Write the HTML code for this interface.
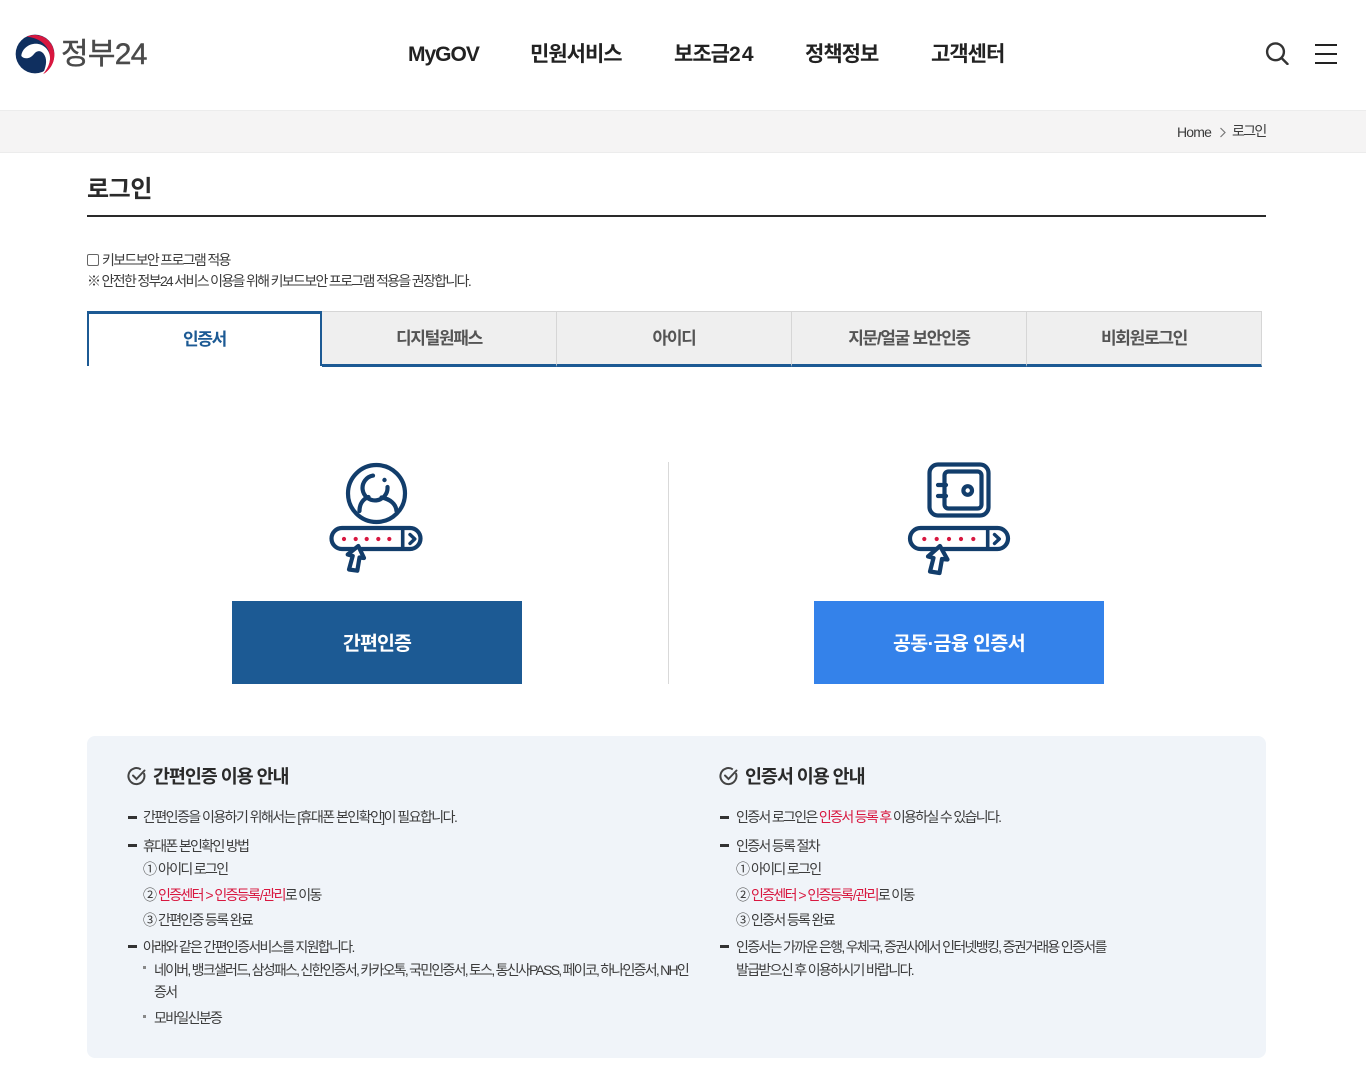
<!DOCTYPE html>
<html lang="ko"><head><meta charset="utf-8"><title>로그인 | 정부24</title>
<style>
*{box-sizing:border-box}
html,body{margin:0;padding:0;background:#fff}
body{width:1366px;height:1080px;position:relative;overflow:hidden;font-family:"Liberation Sans","Noto Sans CJK KR",sans-serif;color:#333}
.t{position:absolute;white-space:nowrap;line-height:20px;font-size:14px;letter-spacing:-1.67px;color:#3c3c3c}
.t i{font-style:normal;letter-spacing:1px}
.t b{font-weight:400;margin:0 2.5px}
.t u{text-decoration:none;margin:0 .5px}
.nav{font-size:21px;font-weight:700;letter-spacing:-1px;color:#222;top:42px;line-height:26px}
.tab{position:absolute;top:311px;height:56px;width:235px;background:#efefef;border:1px solid #d6d6d6;border-left:0;border-bottom:3px solid #1c5a94;text-align:center;font-size:17px;font-weight:700;line-height:53px;letter-spacing:-1.3px;color:#555}
.r{color:#d8173f}
.dash{position:absolute;width:9px;height:2.5px;background:#333}
.sq{position:absolute;width:3px;height:3px;background:#888}
.h{font-size:18.5px;font-weight:700;color:#2a2a2a;letter-spacing:-1.1px;line-height:24px}
.btn{position:absolute;top:601px;width:290px;height:83px;color:#fff;font-size:19.5px;font-weight:700;text-align:center;line-height:86px;letter-spacing:-.9px}
</style></head><body>

<svg style="position:absolute;left:10px;top:30px" width="50" height="48" viewBox="0 0 150 144">
<circle cx="75" cy="72" r="58" fill="#0f2f5f"/>
<path d="M50 20C85 5 130 25 133 72 134 100 118 122 100 132 118 110 125 85 115 60 100 30 70 22 50 20Z" fill="#d8173f"/>
<path d="M34 78C36 55 60 38 85 42 105 45 122 65 120 88 119 105 112 118 100 128 110 105 112 85 100 70 90 60 80 62 72 72 60 88 42 88 34 78Z" fill="#fff"/>
<path d="M133 72C134 100 118 122 100 132L112 134 140 100 140 72Z" fill="#fff"/>
<path d="M133 72C134 100 118 122 100 132 118 110 125 85 118 65Z" fill="#d8173f"/>
</svg>
<div class="t" style="left:61px;top:37px;font-size:30px;line-height:36px;letter-spacing:-.7px;color:#4a4a4a;-webkit-text-stroke:.4px #4a4a4a">정부24</div>

<div class="t nav" style="left:408px">MyGOV</div>
<div class="t nav" style="left:530px">민원서비스</div>
<div class="t nav" style="left:674px">보조금<span style="letter-spacing:1.2px">24</span></div>
<div class="t nav" style="left:805px">정책정보</div>
<div class="t nav" style="left:931px">고객센터</div>

<svg style="position:absolute;left:1264px;top:41px" width="26" height="24" viewBox="0 0 26 24" fill="none" stroke="#333" stroke-width="2.400">
<circle cx="11.500" cy="10.800" r="8.400"/><path d="M17.500 17l6 6" stroke-linecap="round"/></svg>
<div style="position:absolute;left:1315px;top:44px;width:22px;height:2px;background:#222"></div>
<div style="position:absolute;left:1315px;top:53px;width:22px;height:2px;background:#222"></div>
<div style="position:absolute;left:1315px;top:62px;width:22px;height:2px;background:#222"></div>

<div style="position:absolute;left:0;top:110px;width:1366px;height:43px;background:#f5f4f4;border-top:1px solid #ececec;border-bottom:1px solid #ececec"></div>
<div class="t" style="left:1177px;top:122px;letter-spacing:-.8px">Home</div>
<svg style="position:absolute;left:1219px;top:127px" width="8" height="11" viewBox="0 0 8 11" fill="none" stroke="#777" stroke-width="1.200"><path d="M1.500 1l4.500 4.500-4.500 4.500"/></svg>
<div class="t" style="left:1232px;top:121px;">로그인</div>

<div class="t" style="left:87px;top:175px;font-size:24px;line-height:30px;font-weight:700;letter-spacing:-.4px;color:#2b2b2b">로그인</div>
<div style="position:absolute;left:87px;top:215px;width:1179px;height:2px;background:#2a2a2a"></div>

<div style="position:absolute;left:87px;top:254px;width:12px;height:12px;border:1px solid #666;border-radius:2px;background:#fff"></div>
<div class="t" style="left:102px;top:250px">키보드보안 프로그램 적용</div>
<div class="t" style="left:87px;top:271px">※ 안전한 정부24 서비스 이용을 위해 키보드보안 프로그램 적용을 권장합니다.</div>

<div class="tab" style="left:322px;width:235px">디지털원패스</div>
<div class="tab" style="left:557px">아이디</div>
<div class="tab" style="left:792px">지문/얼굴 보안인증</div>
<div class="tab" style="left:1027px">비회원로그인</div>
<div style="position:absolute;left:87px;top:311px;width:235px;height:55px;background:#fff;border:3px solid #1c5a94;border-bottom:0;border-left-width:2.500px;border-right-width:2px;text-align:center;font-size:17px;font-weight:700;line-height:52px;letter-spacing:-1.3px;color:#1c5a94">인증서</div>

<svg style="position:absolute;left:300px;top:450px" width="150" height="135" viewBox="0 0 150 135" fill="none" stroke="#123d6b" stroke-width="4.200" stroke-linecap="round" stroke-linejoin="round">
<circle cx="76.500" cy="43.500" r="28.500"/>
<path d="M73 25.600A12.500 12.500 0 1 0 87.500 37"/>
<circle cx="84.500" cy="30" r="2.200" fill="#123d6b" stroke="none"/>
<path d="M59.500 61C59.500 54 63 49 68.500 47M81.500 47.500C90 49 96 54 96.500 61"/>
<rect x="31.500" y="78" width="89" height="21" rx="10.500"/>
<path d="M102.700 78v21" stroke-width="3.600"/>
<path d="M110 84.500l4.800 4.500-4.800 4.500" stroke-width="3.400"/>
<path d="M58.300 96L47.700 104.500 52.700 106 49 119.500 57.300 120.700 59.500 107.500 64 108Z" fill="#fff"/>
<g fill="#d8173f" stroke="none"><circle cx="44" cy="89" r="2.100"/><circle cx="55.700" cy="89" r="2.100"/><circle cx="66.700" cy="89" r="2.100"/><circle cx="78.300" cy="89" r="2.100"/><circle cx="89.300" cy="89" r="2.100"/></g>
</svg>

<svg style="position:absolute;left:890px;top:450px" width="140" height="135" viewBox="0 0 140 135" fill="none" stroke="#123d6b" stroke-width="4.200" stroke-linecap="round" stroke-linejoin="round">
<rect x="39.500" y="14.500" width="59" height="51" rx="8.500"/>
<rect x="54.500" y="21.500" width="37" height="37" rx="4"/>
<path d="M48 35h8M48 46h8"/>
<circle cx="77.700" cy="40.500" r="4.300"/>
<rect x="20" y="78" width="98" height="21" rx="10.500"/>
<path d="M97.700 78v21" stroke-width="3.600"/>
<path d="M104.500 84.500l4.800 4.500-4.800 4.500" stroke-width="3.400"/>
<path d="M50 96L38 106.500 43.500 108 40 121.500 49.500 123 52 109 57.500 109.500Z" fill="#fff"/>
<g fill="#d8173f" stroke="none"><circle cx="34.300" cy="89" r="2.100"/><circle cx="46.700" cy="89" r="2.100"/><circle cx="59" cy="89" r="2.100"/><circle cx="71" cy="89" r="2.100"/><circle cx="83.300" cy="89" r="2.100"/></g>
</svg>

<div style="position:absolute;left:668px;top:462px;width:1px;height:222px;background:#d9d9d9"></div>
<div class="btn" style="left:232px;background:#1c5a94">간편인증</div>
<div class="btn" style="left:814px;background:#3482ea;letter-spacing:-.6px">공동·금융 인증서</div>

<div style="position:absolute;left:87px;top:736px;width:1179px;height:322px;background:#f0f4f9;border-radius:8px"></div>

<svg style="position:absolute;left:127px;top:766px" width="20" height="20" viewBox="0 0 20 20" fill="none" stroke="#444" stroke-width="2"><path d="M16.800 7a8 8 0 1 1-3-3.600"/><path d="M6 9.500l3.500 3.500 8-8.500" stroke-linecap="round"/></svg>
<div class="t h" style="left:153px;top:765px">간편인증 이용 안내</div>
<svg style="position:absolute;left:719px;top:766px" width="20" height="20" viewBox="0 0 20 20" fill="none" stroke="#444" stroke-width="2"><path d="M16.800 7a8 8 0 1 1-3-3.600"/><path d="M6 9.500l3.500 3.500 8-8.500" stroke-linecap="round"/></svg>
<div class="t h" style="left:745px;top:765px">인증서 이용 안내</div>

<div class="dash" style="left:128px;top:816px"></div>
<div class="t" style="left:143px;top:807px;letter-spacing:-1.55px">간편인증을 이용하기 위해서는 [휴대폰 본인확인]이 필요합니다.</div>
<div class="dash" style="left:128px;top:844px"></div>
<div class="t" style="left:143px;top:836px">휴대폰 본인확인 방법</div>
<div class="t" style="left:143px;top:859px"><i>①</i>아이디 로그인</div>
<div class="t" style="left:143px;top:885px"><i>②</i><span class="r">인증센터<b>&gt;</b>인증등록<u>/</u>관리</span>로 이동</div>
<div class="t" style="left:143px;top:910px"><i>③</i>간편인증 등록 완료</div>
<div class="dash" style="left:128px;top:945px"></div>
<div class="t" style="left:143px;top:937px">아래와 같은 간편인증서비스를 지원합니다.</div>
<div class="sq" style="left:143px;top:966px"></div>
<div class="t" style="left:154px;top:960px;letter-spacing:-1.75px">네이버, 뱅크샐러드, 삼성패스, 신한인증서, 카카오톡, 국민인증서, 토스, 통신사PASS, 페이코, 하나인증서, NH인</div>
<div class="t" style="left:154px;top:982px">증서</div>
<div class="sq" style="left:143px;top:1015px"></div>
<div class="t" style="left:154px;top:1008px">모바일신분증</div>

<div class="dash" style="left:720px;top:816px"></div>
<div class="t" style="left:736px;top:807px">인증서 로그인은 <span class="r">인증서 등록 후</span> 이용하실 수 있습니다.</div>
<div class="dash" style="left:720px;top:844px"></div>
<div class="t" style="left:736px;top:836px">인증서 등록 절차</div>
<div class="t" style="left:736px;top:859px"><i>①</i>아이디 로그인</div>
<div class="t" style="left:736px;top:885px"><i>②</i><span class="r">인증센터<b>&gt;</b>인증등록<u>/</u>관리</span>로 이동</div>
<div class="t" style="left:736px;top:910px"><i>③</i>인증서 등록 완료</div>
<div class="dash" style="left:720px;top:945px"></div>
<div class="t" style="left:736px;top:937px">인증서는 가까운 은행, 우체국, 증권사에서 인터넷뱅킹, 증권거래용 인증서를</div>
<div class="t" style="left:736px;top:960px">발급받으신 후 이용하시기 바랍니다.</div>

</body></html>
